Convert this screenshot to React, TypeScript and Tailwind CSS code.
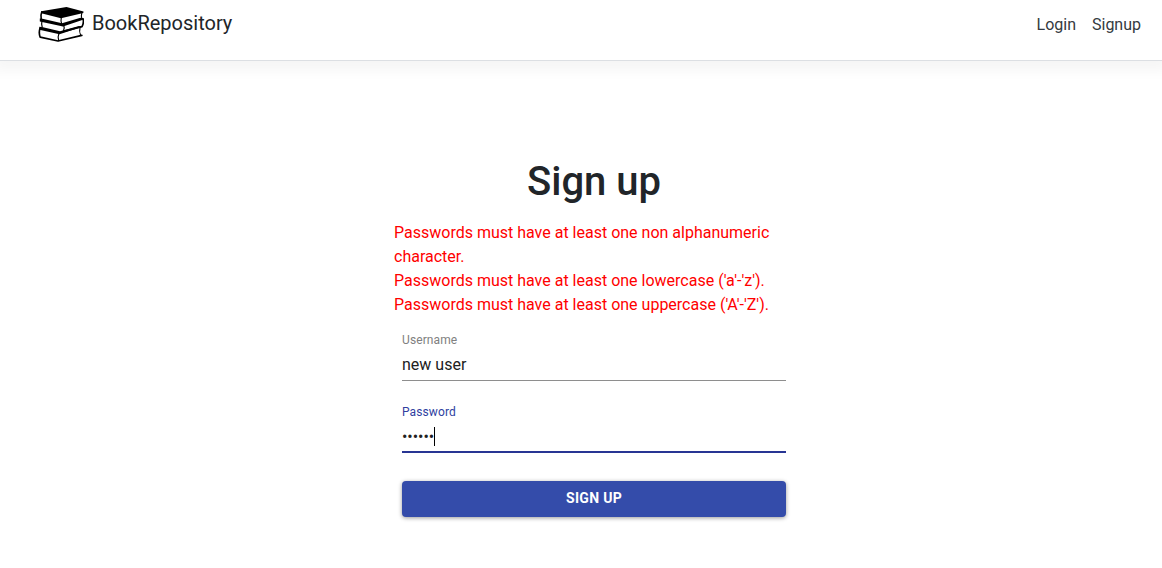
import React from "react";

function BooksLogo() {
  return (
    <svg width="46" height="36" viewBox="38 6 46 36" className="block" fill="none" stroke="#000">
      <g fill="#000" stroke="none">
        <path d="M41.2 11.2 L66.5 7 L83.5 11.4 L83.3 13 L61 18.3 L41.2 13.2 Z" />
        <path d="M39.8 18.4 L42.5 18.8 L62 23.3 L80.5 17.8 L83.6 18.2 L83 19.8 L63 26.4 L39.8 21.6 Z" />
        <path d="M39.3 26.8 L43 27.2 L60 31.2 L79 26 L82.3 26.8 L59.5 34.2 L39.3 29.8 Z" />
      </g>
      <g strokeLinecap="round" strokeLinejoin="round">
        <path d="M41.8 11.8 Q40.4 15 41.2 19.2" strokeWidth="1.6" />
        <path d="M61.3 17.5 Q60.5 20.5 61.8 24.3 M81.8 13 Q81 15.5 81.8 18.4" strokeWidth="1.1" />
        <path d="M83 18.8 Q84.2 22.4 82 26.6 L63.5 31.4" strokeWidth="1.7" />
        <path d="M63.8 25.6 Q65 28.3 63.3 31.2 M42 20.8 Q41.2 23.6 42.2 27.2" strokeWidth="1.2" />
        <path d="M40 28.5 Q38.5 32.5 40.2 37.2 L58 41 L81.8 35.3" strokeWidth="1.7" />
        <path d="M59 33 Q57.6 36.5 58.7 40.6 M80 28 Q79 31.5 80.5 34.8" strokeWidth="1.1" />
      </g>
    </svg>
  );
}

export default function App() {
  return (
    <div className="min-h-[568px] overflow-hidden bg-white font-['Roboto',sans-serif] text-[#212529]">
      <header className="flex h-[61px] items-start border-b border-[#dcdfe3] pl-[38px] pr-[21px] pt-[6px] shadow-[0_4px_12px_6px_rgba(0,0,0,0.04)]">
        <BooksLogo />
        <span className="ml-2 text-[20px] leading-[34px]">BookRepository</span>
        <nav className="ml-auto flex gap-4 pt-[7px] text-[16px] leading-6 text-[#343a40]">
          <a>Login</a>
          <a>Signup</a>
        </nav>
      </header>
      <main className="ml-[394px] w-[400px] pt-[97px]">
        <h1 className="text-center text-[40px] font-medium leading-[48px]">Sign up</h1>
        <ul className="mt-[15px] text-[16px] leading-6 text-[#ff0000]">
          <li>Passwords must have at least one non alphanumeric character.</li>
          <li>Passwords must have at least one lowercase ('a'-'z').</li>
          <li>Passwords must have at least one uppercase ('A'-'Z').</li>
        </ul>
        <form className="mx-2 mt-4">
          <div className="h-12 border-b border-[#8e8e8e]">
            <div className="text-[12px] leading-[14px] tracking-[0.1px] text-[#808080]">Username</div>
            <div className="mt-2 text-[16px] leading-5 text-[#212121]">new user</div>
          </div>
          <div className="mt-6 h-12 border-b-2 border-[#283593]">
            <div className="text-[12px] leading-[14px] tracking-[0.1px] text-[#303f9f]">Password</div>
            <div className="mt-2 flex items-start text-[#212121]">
              <span className="h-5 w-8 overflow-hidden text-[16px] leading-5 tracking-[-0.04px]">••••••</span>
              <span className="h-[19px] w-px bg-black" />
            </div>
          </div>
          <button
            type="button"
            className="mt-7 block h-9 w-full rounded-[4px] bg-[#344caa] pb-0.5 text-center text-[14px] font-bold leading-[32px] tracking-[0.3px] text-white shadow-[0_1px_4px_rgba(0,0,0,0.4)]"
          >
            SIGN UP
          </button>
        </form>
      </main>
    </div>
  );
}
